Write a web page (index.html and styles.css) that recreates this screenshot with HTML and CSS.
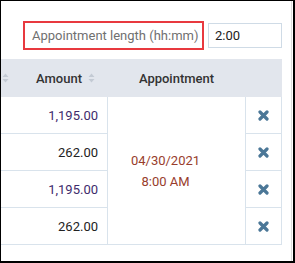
FILE: index.html
```html
<!DOCTYPE html>
<html>
<head>
<meta charset="utf-8">
<link rel="stylesheet" href="styles.css">
</head>
<body>
<div class="frame">
  <div class="panel">
    <div class="toolbar">
      <div class="label-box">Appointment length (hh:mm)</div>
      <div class="input">2:00</div>
    </div>
    <div class="table">
      <div class="th th-amount">
        <svg class="sort" width="7" height="10" viewBox="0 0 7 10"><path d="M3.5 0.5 L6.5 4 L0.5 4 Z M3.5 9.5 L6.5 6 L0.5 6 Z" fill="#c3cad4"/></svg>
        <span class="th-label">Amount
          <svg class="sort" width="7" height="10" viewBox="0 0 7 10"><path d="M3.5 0.5 L6.5 4 L0.5 4 Z M3.5 9.5 L6.5 6 L0.5 6 Z" fill="#c3cad4"/></svg>
        </span>
      </div>
      <div class="th th-appt">Appointment</div>
      <div class="th th-x"></div>

      <div class="td amount purple r1">1,195.00</div>
      <div class="td appt"><span>04/30/2021</span><span>8:00 AM</span></div>
      <div class="td x r1"><svg width="11" height="11" viewBox="0 0 11 11"><path d="M2 2 L9 9 M9 2 L2 9" stroke="#4b7797" stroke-width="3.2" stroke-linecap="round"/></svg></div>

      <div class="td amount r2">262.00</div>
      <div class="td x r2"><svg width="11" height="11" viewBox="0 0 11 11"><path d="M2 2 L9 9 M9 2 L2 9" stroke="#4b7797" stroke-width="3.2" stroke-linecap="round"/></svg></div>

      <div class="td amount purple r3">1,195.00</div>
      <div class="td x r3"><svg width="11" height="11" viewBox="0 0 11 11"><path d="M2 2 L9 9 M9 2 L2 9" stroke="#4b7797" stroke-width="3.2" stroke-linecap="round"/></svg></div>

      <div class="td amount r4">262.00</div>
      <div class="td x r4"><svg width="11" height="11" viewBox="0 0 11 11"><path d="M2 2 L9 9 M9 2 L2 9" stroke="#4b7797" stroke-width="3.2" stroke-linecap="round"/></svg></div>
    </div>
  </div>
</div>
</body>
</html>
```
FILE: styles.css
```css
* { box-sizing: border-box; }
html, body { margin: 0; padding: 0; background: #fff; }
body { font-family: Roboto, "Liberation Sans", sans-serif; font-size: 13px; }

.frame {
  width: 295px;
  height: 263px;
  border-style: solid;
  border-color: #000;
  border-width: 1px 2px 2px 1px;
  background: #fff;
  overflow: hidden;
}
.panel {
  width: 291px;
  height: 100%;
  border-right: 1px solid #dcdcdc;
  padding-top: 20px;
}
.toolbar {
  display: flex;
  align-items: center;
  padding-left: 22px;
  gap: 4px;
  height: 29px;
}
.label-box {
  width: 181px;
  height: 29px;
  border: 2px solid #e8393f;
  color: #707070;
  display: flex;
  align-items: center;
  padding-left: 7px;
  white-space: nowrap;
}
.input {
  width: 74px;
  height: 25px;
  border: 1px solid #cfdbe6;
  color: #222;
  display: flex;
  align-items: center;
  padding-left: 6px;
}
.table {
  margin-top: 9px;
  display: grid;
  grid-template-columns: 106px 139px 36px;
  grid-template-rows: 38px repeat(4, 37px);
  width: 281px;
}
.th {
  background: #e2e6ed;
  color: #333;
  font-weight: 500;
  display: flex;
  align-items: center;
}
.th-amount {
  justify-content: space-between;
  padding-left: 1px;
  padding-right: 12px;
}
.th-label { display: flex; align-items: center; gap: 6px; }
.th-appt { justify-content: center; }
.sort { display: block; }
.td {
  border-bottom: 1px solid #d9e3ec;
  display: flex;
  align-items: center;
}
.amount {
  grid-column: 1;
  justify-content: flex-end;
  padding-right: 9px;
  color: #222;
}
.purple { color: #3e2c6c; }
.r1 { grid-row: 2; }
.r2 { grid-row: 3; }
.r3 { grid-row: 4; }
.r4 { grid-row: 5; }
.appt {
  grid-column: 2;
  grid-row: 2 / span 4;
  border-left: 1px solid #d9e3ec;
  border-right: 1px solid #d9e3ec;
  flex-direction: column;
  justify-content: center;
  align-items: center;
  padding-right: 22px;
  color: #983d2c;
  line-height: 21px;
}
.x {
  grid-column: 3;
  justify-content: center;
  border-right: 1px solid #d9e3ec;
}
.x svg { display: block; }
```
